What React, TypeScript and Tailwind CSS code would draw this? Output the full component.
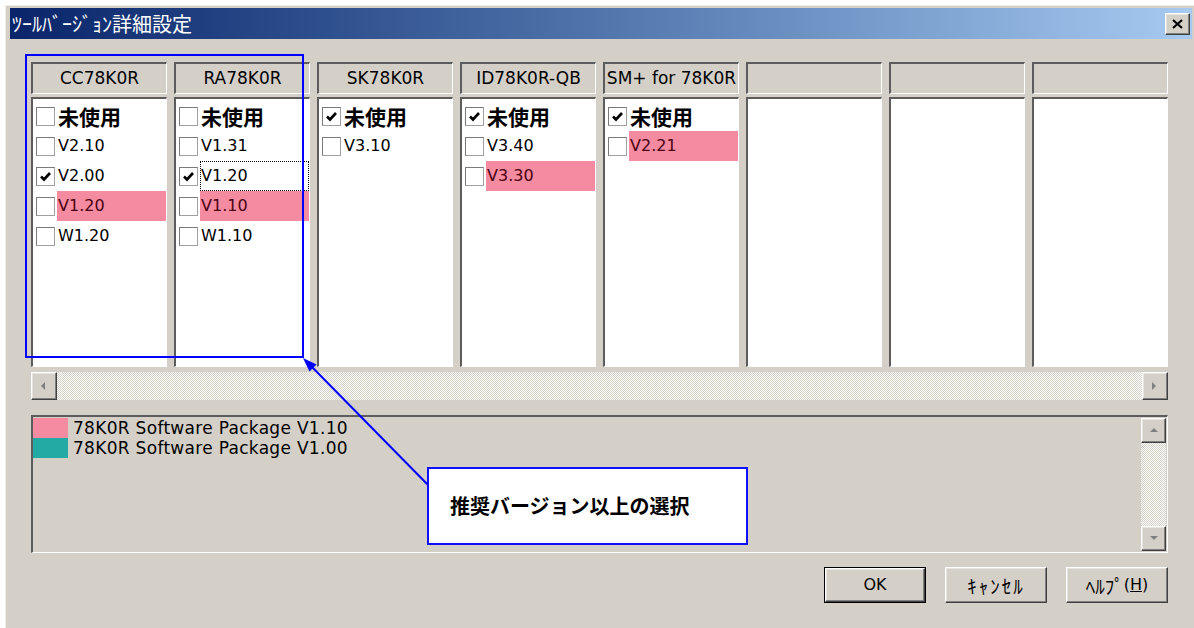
import React from 'react';

interface Item {
  label: string;
  checked?: boolean;
  bold?: boolean;
  pink?: boolean;
  focus?: boolean;
}

interface Column {
  name: string;
  items: Item[];
}

const columns: Column[] = [
  {
    name: 'CC78K0R',
    items: [
      { label: '未使用', bold: true },
      { label: 'V2.10' },
      { label: 'V2.00', checked: true },
      { label: 'V1.20', pink: true },
      { label: 'W1.20' },
    ],
  },
  {
    name: 'RA78K0R',
    items: [
      { label: '未使用', bold: true },
      { label: 'V1.31' },
      { label: 'V1.20', checked: true, focus: true },
      { label: 'V1.10', pink: true },
      { label: 'W1.10' },
    ],
  },
  {
    name: 'SK78K0R',
    items: [
      { label: '未使用', bold: true, checked: true },
      { label: 'V3.10' },
    ],
  },
  {
    name: 'ID78K0R-QB',
    items: [
      { label: '未使用', bold: true, checked: true },
      { label: 'V3.40' },
      { label: 'V3.30', pink: true },
    ],
  },
  {
    name: 'SM+ for 78K0R',
    items: [
      { label: '未使用', bold: true, checked: true },
      { label: 'V2.21', pink: true },
    ],
  },
  { name: '', items: [] },
  { name: '', items: [] },
  { name: '', items: [] },
];

const raised =
  'border border-t-white border-l-white border-r-[#404040] border-b-[#404040] shadow-[inset_-1px_-1px_0_#808080,inset_1px_1px_0_#e6e4de]';
// heavy dark top/left edge, light bottom/right, like the win2000 field frame
const sunken =
  'border-t-2 border-l-2 border-r border-b border-t-[#5c5c5c] border-l-[#5c5c5c] border-r-white border-b-white';
const track =
  'bg-[image:repeating-conic-gradient(#d4d0c8_0%_25%,#ffffff_0%_50%)] bg-[length:2px_2px]';
const kana = "font-['Noto_Sans_CJK_JP',sans-serif]";

const CheckBox = ({ checked }: { checked?: boolean }) => (
  <span className="w-[19px] h-[19px] shrink-0 bg-white border border-[#a0a0a0] border-t-[#7a7a7a] border-l-[#7a7a7a] flex items-center justify-center">
    {checked && (
      <svg width="13" height="13" viewBox="0 0 13 13">
        <path d="M2 6.5 L5 9.5 L11 3" stroke="#000" strokeWidth="2.6" fill="none" />
      </svg>
    )}
  </span>
);

const Arrow = ({ dir }: { dir: 'left' | 'right' | 'up' | 'down' }) => {
  const pts = {
    left: '6,1 2,5 6,9',
    right: '2,1 6,5 2,9',
    up: '1,6 5,2 9,6',
    down: '1,2 5,6 9,2',
  }[dir];
  return (
    <svg width="10" height="10" viewBox="0 0 10 10">
      <polygon points={pts} fill="#808080" />
    </svg>
  );
};

const App = () => {
  return (
    <div className="w-[1194px] h-[628px] bg-white relative overflow-hidden font-['DejaVu_Sans',sans-serif] text-black">
      <div className="ml-[5px] mt-[5px] w-[1189px] h-[623px] bg-[#d4d0c8] border-l border-t border-[#eeede8] pt-[2px] pl-[4px] pr-[2px] flex flex-col">
        {/* title bar */}
        <div className="h-[31px] shrink-0 bg-linear-to-r from-[#0a246a] to-[#a6caf0] flex items-center justify-between pl-[2px] pr-[2px]">
          <span className={`${kana} text-[20px] leading-none text-white`}>ﾂｰﾙﾊﾞｰｼﾞｮﾝ詳細設定</span>
          <div className={`w-[25px] h-[22px] bg-[#d4d0c8] ${raised} flex items-center justify-center`}>
            <svg width="11" height="10" viewBox="0 0 11 10">
              <path d="M1 1 L10 9 M10 1 L1 9" stroke="#000" strokeWidth="2.2" />
            </svg>
          </div>
        </div>

        {/* body */}
        <div className="pl-[21px] pt-[23px] flex flex-col">
          <div className="flex gap-[7px]">
            {columns.map((col, ci) => (
              <div key={ci} className="w-[136px] flex flex-col">
                <div className={`h-[32px] ${sunken} text-[17px] leading-[29px] text-center whitespace-nowrap overflow-hidden`}>
                  {col.name}
                </div>
                <div className={`mt-[3px] h-[270px] bg-white ${sunken} pt-[2px] pl-[3px] flex flex-col`}>
                  {col.items.map((it, ii) => (
                    <div key={ii} className="h-[30px] flex items-center">
                      <CheckBox checked={it.checked} />
                      <div
                        className={`ml-[2px] flex-1 h-full flex items-center pl-[1px] ${
                          it.pink ? 'bg-[#f58ba0] text-[#4a0012]' : ''
                        } ${it.focus ? 'outline-1 outline-dotted outline-black -outline-offset-1' : ''}`}
                      >
                        {it.bold ? (
                          <span className={`${kana} font-bold text-[21px] leading-none`}>{it.label}</span>
                        ) : (
                          <span className="text-[16px] leading-none">{it.label}</span>
                        )}
                      </div>
                    </div>
                  ))}
                </div>
              </div>
            ))}
          </div>

          {/* horizontal scrollbar */}
          <div className={`mt-[5px] w-[1137px] h-[28px] flex ${track}`}>
            <div className={`w-[26px] h-full bg-[#d4d0c8] ${raised} flex items-center justify-center`}>
              <Arrow dir="left" />
            </div>
            <div className="flex-1" />
            <div className={`w-[26px] h-full bg-[#d4d0c8] ${raised} flex items-center justify-center`}>
              <Arrow dir="right" />
            </div>
          </div>

          {/* legend */}
          <div className={`mt-[15px] w-[1137px] h-[138px] ${sunken} flex`}>
            <div className="flex-1 pt-[1px] flex flex-col text-[17px]">
              <div className="h-[20px] flex items-center">
                <span className="w-[35px] h-full bg-[#f58ba0]" />
                <span className="ml-[5px] leading-none tracking-[0.3px]">78K0R Software Package V1.10</span>
              </div>
              <div className="h-[20px] flex items-center">
                <span className="w-[35px] h-full bg-[#22aaa5]" />
                <span className="ml-[5px] leading-none tracking-[0.3px]">78K0R Software Package V1.00</span>
              </div>
            </div>
            <div className={`w-[25px] my-[1px] mr-[1px] flex flex-col justify-between ${track}`}>
              <div className={`h-[25px] bg-[#d4d0c8] ${raised} flex items-center justify-center`}>
                <Arrow dir="up" />
              </div>
              <div className={`h-[25px] bg-[#d4d0c8] ${raised} flex items-center justify-center`}>
                <Arrow dir="down" />
              </div>
            </div>
          </div>

          {/* buttons */}
          <div className="mt-[14px] w-[1137px] flex justify-end gap-[19px]">
            <div className="w-[102px] h-[36px] border border-black flex">
              <div className={`flex-1 ${raised} flex items-center justify-center text-[16px]`}>OK</div>
            </div>
            <div className={`w-[102px] h-[36px] ${raised} flex items-center justify-center`}>
              <span className={`${kana} text-[19px] leading-none tracking-[2px]`}>ｷｬﾝｾﾙ</span>
            </div>
            <div className={`w-[102px] h-[36px] ${raised} flex items-center justify-center`}>
              <span className={`${kana} text-[19px] leading-none`}>ﾍﾙﾌﾟ</span>
              <span className="text-[16px] leading-none">
                (<span className="underline">H</span>)
              </span>
            </div>
          </div>
        </div>
      </div>

      {/* annotation overlay */}
      <div className="absolute left-[25px] top-[54px] w-[279px] h-[304px] border-2 border-[#0000ff]" />
      <svg className="absolute left-0 top-0 pointer-events-none" width="1194" height="628">
        <line x1="431" y1="488" x2="312" y2="367" stroke="#0000ff" strokeWidth="2" />
        <polygon points="303,358 316.5,364.5 309.5,371.5" fill="#0000ff" />
      </svg>
      <div className="absolute left-[427px] top-[467px] w-[321px] h-[78px] bg-white border-2 border-[#1010ff] flex items-center pl-[21px]">
        <span className={`${kana} font-bold text-[20px] leading-none`}>推奨バージョン以上の選択</span>
      </div>
    </div>
  );
};

export default App;
